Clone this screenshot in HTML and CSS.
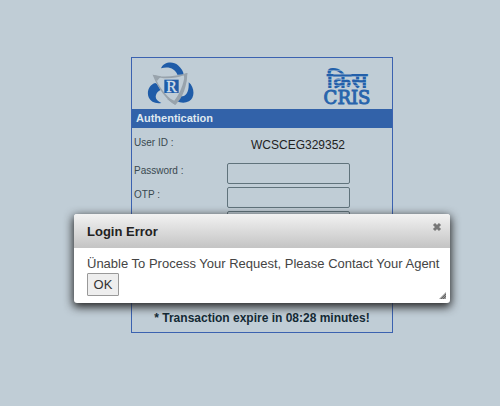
FILE: index.html
```html
<!DOCTYPE html>
<html lang="en">
<head>
    <meta charset="UTF-8">
    <meta name="viewport" content="width=device-width, initial-scale=1.0">
    <title>Authentication</title>
    <link rel="stylesheet" href="styles.css">
</head>
<body>
    <main class="login-panel">
        <div class="logos">
            <svg class="rail-logo" viewBox="66 34 141 132" role="img" aria-label="Indian Railways">
                <g fill="#1f5ca8">
                    <path d="M108 53C115 34 144 30 159 44C170 54 175 62 176 72L157 72C151 54 131 46 108 53Z"/>
                    <path d="M91 97C73 102 64 122 71 140C77 154 92 160 109 157C95 150 90 143 93 133C96 124 101 121 107 118L96 100Z"/>
                    <path d="M191 95C209 109 211 142 192 152C180 158 166 157 155 151L163 136C180 141 193 127 191 95Z"/>
                </g>
                <path fill="#98a3ac" fill-rule="evenodd" d="M83 72C113 82 151 77 187 67C186 105 175 139 151 163C125 149 97 111 83 72ZM90 78C101 107 121 135 147 151C164 130 176 101 179 73C149 84 117 85 90 78Z"/>
                <path fill="#98a3ac" d="M83 72L108 77L96 91ZM187 67L183 96L175 71ZM151 163L126 145L145 148Z"/>
                <rect x="118" y="87" width="43" height="40" fill="#1f5ca8"/>
                <text class="rail-letters" x="124" y="124">R</text>
            </svg>
            <svg class="cris-logo" viewBox="0 0 48 46" role="img" aria-label="CRIS">
                <defs>
                    <pattern id="lines" width="4" height="3" patternUnits="userSpaceOnUse">
                        <rect width="4" height="3" fill="#6591c2"/>
                        <rect width="4" height="2" fill="#2460aa"/>
                    </pattern>
                </defs>
                <text class="cris-hindi" x="24" y="26" fill="url(#lines)">क्रिस</text>
                <text class="cris-name" x="24" y="42" fill="#2864ac">CRIS</text>
            </svg>
        </div>
        <h1 class="panel-title">Authentication</h1>
        <form class="login-form">
            <div class="row">
                <span class="label">User ID :</span>
                <span class="user-id">WCSCEG329352</span>
            </div>
            <div class="row">
                <label class="label" for="password">Password :</label>
                <input class="field" type="password" id="password">
            </div>
            <div class="row">
                <label class="label" for="otp">OTP :</label>
                <input class="field" type="text" id="otp">
            </div>
            <div class="row">
                <span class="label"></span>
                <input class="field" type="text" aria-label="Captcha">
            </div>
        </form>
        <p class="expire">* Transaction expire in 08:28 minutes!</p>
    </main>

    <div class="dialog" role="dialog" aria-labelledby="dialog-title">
        <div class="dialog-header">
            <h2 class="dialog-title" id="dialog-title">Login Error</h2>
            <button class="close" type="button" aria-label="Close">
                <svg viewBox="0 0 10 10"><path d="M2 2L8 8M8 2L2 8" stroke="#777" stroke-width="3"/></svg>
            </button>
        </div>
        <div class="dialog-body">
            <p class="message">Ünable To Process Your Request, Please Contact Your Agent</p>
            <button class="ok" type="button">OK</button>
        </div>
        <svg class="grip" viewBox="0 0 7 7"><path d="M0 7L7 0V7Z" fill="#999"/><path d="M2 7L7 2M4 7L7 4" stroke="#666" stroke-width="1"/></svg>
    </div>
</body>
</html>
```

FILE: styles.css
```css
* {
    box-sizing: border-box;
}
body {
    margin: 0;
    padding: 57px 16px 57px 40px;
    font-family: "Liberation Sans", Arial, sans-serif;
    background-color: #c0cdd6;
    color: #222;
}
h1, h2, p {
    margin: 0;
}
.login-panel {
    width: 100%;
    max-width: 262px;
    margin: 0 auto;
    border: 1px solid #3b62b0;
}
.logos {
    display: flex;
    justify-content: space-between;
    align-items: flex-start;
    padding: 4px 21px 1px 15px;
}
.rail-logo {
    width: 47px;
    height: 44px;
}
.cris-logo {
    width: 48px;
    height: 46px;
}
.rail-letters {
    font: 48px "Liberation Serif", serif;
    fill: #d4dfe8;
    stroke: #d4dfe8;
}
.cris-hindi {
    font: bold 22px "Noto Sans", sans-serif;
    text-anchor: middle;
}
.cris-name {
    font: 18px "DejaVu Serif", serif;
    text-anchor: middle;
    stroke: #2864ac;
    stroke-width: 1px;
}
.panel-title {
    padding: 0 4px;
    font-size: 11px;
    line-height: 19px;
    color: #dfe8f0;
    background-color: #3262a9;
}
.login-form {
    display: flex;
    flex-direction: column;
    gap: 3px;
    padding: 7px 2px 0;
}
.row {
    display: flex;
    align-items: flex-start;
    min-height: 21px;
}
.row:first-child {
    min-height: 25px;
}
.label {
    width: 93px;
    font-size: 10px;
    line-height: 16px;
    color: #39484f;
}
.user-id {
    padding-left: 24px;
    font-size: 12px;
    line-height: 20px;
}
.field {
    width: 123px;
    height: 21px;
    border: 1px solid #60737c;
    border-radius: 2px;
    background: transparent;
}
.expire {
    padding: 78px 0 6px;
    font-size: 12px;
    font-weight: bold;
    line-height: 16px;
    text-align: center;
    color: #142a35;
}
.dialog {
    position: absolute;
    top: 214px;
    left: 74px;
    right: 50px;
    border-radius: 3px;
    background-color: #fff;
    box-shadow: 0 3px 10px 1px #222;
}
.dialog-header {
    display: flex;
    justify-content: space-between;
    align-items: flex-start;
    padding: 8px 8px 6px 13px;
    border-radius: 3px 3px 0 0;
    background: linear-gradient(#f2f2f2, #c4c4c4);
}
.dialog-title {
    font-size: 13px;
    line-height: 20px;
}
.close {
    width: 10px;
    height: 10px;
    padding: 0;
    border: 0;
    background: none;
}
.close svg {
    display: block;
}
.dialog-body {
    padding: 8px 6px 7px 13px;
    color: #444;
}
.message {
    font-size: 13px;
    line-height: 16px;
}
.ok {
    display: block;
    width: 32px;
    height: 23px;
    margin-top: 1px;
    padding: 0;
    font: 13px "Liberation Sans", Arial, sans-serif;
    color: #333;
    border: 1px solid #999;
    border-radius: 1px;
    background-color: #eee;
}
.grip {
    position: absolute;
    right: 4px;
    bottom: 4px;
    width: 7px;
    height: 7px;
}
```
